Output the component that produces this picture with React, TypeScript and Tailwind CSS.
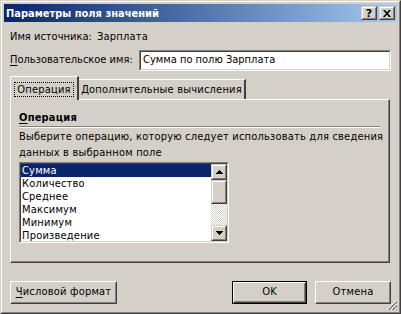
import React from 'react';

const raised =
  'border border-t-white border-l-white border-r-[#404040] border-b-[#404040]';
const raisedInner =
  'border border-t-[#d4d0c8] border-l-[#d4d0c8] border-r-[#808080] border-b-[#808080]';

function Btn({ children, w, isDefault }: { children: React.ReactNode; w: string; isDefault?: boolean }) {
  const inner = (
    <div className={`${raised} h-full w-full`}>
      <div className={`${raisedInner} h-full w-full flex items-center justify-center`}>{children}</div>
    </div>
  );
  if (isDefault) {
    return <div className={`${w} h-[23px] border border-black`}>{inner}</div>;
  }
  return <div className={`${w} h-[23px]`}>{inner}</div>;
}

function Arrow({ up }: { up?: boolean }) {
  return (
    <svg width="7" height="4" viewBox="0 0 7 4">
      <path d={up ? 'M3 0h1v1h1v1h1v1h1v1H0V3h1V2h1V1h1z' : 'M0 0h7v1H6v1H5v1H4v1H3V3H2V2H1V1H0z'} fill="#000" />
    </svg>
  );
}

function ScrollBtn({ children, h }: { children?: React.ReactNode; h: string }) {
  return (
    <div className={`w-[16px] ${h} border border-t-[#d4d0c8] border-l-[#d4d0c8] border-r-[#404040] border-b-[#404040]`}>
      <div className="h-full w-full border border-t-white border-l-white border-r-[#808080] border-b-[#808080] bg-[#d4d0c8] flex items-center justify-center">
        {children}
      </div>
    </div>
  );
}

const items = ['Сумма', 'Количество', 'Среднее', 'Максимум', 'Минимум', 'Произведение'];

export default function App() {
  return (
    <div className="w-[401px] h-[314px] bg-[#d4d0c8] text-[11px] tracking-[0.2px] whitespace-nowrap text-black font-['DejaVu_Sans_Condensed','DejaVu_Sans',sans-serif] select-none">
      <div className="relative h-full border border-t-[#d4d0c8] border-l-[#d4d0c8] border-r-[#404040] border-b-[#404040]">
        <div className="h-full border border-t-white border-l-white border-r-[#808080] border-b-[#808080] p-[2px] flex flex-col">
          {/* title bar */}
          <div className="h-[18px] bg-gradient-to-r from-[#0a246a] to-[#a6caf0] flex items-center pl-[2px] pr-[2px]">
            <span className="text-white font-bold text-[11px] tracking-normal leading-none">Параметры поля значений</span>
            <div className="ml-auto flex gap-[2px]">
              <ScrollBtn h="h-[14px]">
                <span className="font-bold text-[11px] leading-none font-['DejaVu_Sans',sans-serif]">?</span>
              </ScrollBtn>
              <ScrollBtn h="h-[14px]">
                <svg width="8" height="7" viewBox="0 0 8 7">
                  <path d="M0 0h2l2 2.3L6 0h2L5 3.5 8 7H6L4 4.7 2 7H0l3-3.5z" fill="#000" />
                </svg>
              </ScrollBtn>
            </div>
          </div>

          <div className="px-[6px] flex flex-col">
            <div className="mt-[8px] flex leading-[13px]">
              <span className="w-[87px] shrink-0 tracking-normal">Имя источника:</span>
              <span>Зарплата</span>
            </div>

            <div className="mt-[7px] flex items-center h-[21px]">
              <span className="w-[129px] shrink-0 tracking-normal">
                <span className="underline underline-offset-2">П</span>ользовательское имя:
              </span>
              <div className="flex-1 h-[21px] border border-t-[#808080] border-l-[#808080] border-r-white border-b-white">
                <div className="h-full border border-t-[#404040] border-l-[#404040] border-r-[#d4d0c8] border-b-[#d4d0c8] bg-white flex items-center pl-[2px] tracking-normal">
                  Сумма по полю Зарплата
                </div>
              </div>
            </div>

            {/* tabs */}
            <div className="mt-[5px] flex items-end">
              <div className="relative z-10 -mb-px h-[24px] w-[69px] bg-[#d4d0c8] border-t border-l border-t-white border-l-white border-r-2 border-r-[#404040] flex items-start justify-center pt-[5px]">
                <span className="border border-dotted border-black px-[2px] leading-[13px]">Операция</span>
              </div>
              <div className="h-[20px] w-[167px] border-t border-t-white border-r-2 border-r-[#404040] flex items-center justify-center pt-[1px]">
                Дополнительные вычисления
              </div>
            </div>

            {/* panel */}
            <div className="h-[164px] mr-px border-t border-l border-t-white border-l-white border-r border-b border-r-[#404040] border-b-[#404040]">
              <div className="h-full border-r border-b border-r-[#808080] border-b-[#808080] px-[8px] pt-[11px] flex flex-col">
                <div className="font-bold leading-[13px]">
                  <span className="underline underline-offset-2">О</span>перация
                </div>
                <div className="mt-[2px] h-[2px] border-t border-t-[#808080] border-b border-b-white" />
                <div className="mt-px leading-[16px]">
                  Выберите операцию, которую следует использовать для сведения
                  <br />
                  данных в выбранном поле
                </div>
                <div className="mt-px w-[210px] h-[81px] border border-t-[#808080] border-l-[#808080] border-r-white border-b-white">
                  <div className="h-full border border-t-[#404040] border-l-[#404040] border-r-[#d4d0c8] border-b-[#d4d0c8] bg-white flex">
                    <div className="flex-1 overflow-hidden">
                      {items.map((it, i) => (
                        <div
                          key={it}
                          className={`h-[13px] leading-[13px] pl-px ${i === 0 ? 'bg-[#0a246a] text-white' : ''}`}
                        >
                          {it}
                        </div>
                      ))}
                    </div>
                    <div className="w-[16px] flex flex-col">
                      <ScrollBtn h="h-[16px]">
                        <Arrow up />
                      </ScrollBtn>
                      <ScrollBtn h="h-[24px]" />
                      <div className="flex-1 bg-[repeating-conic-gradient(#d4d0c8_0%_25%,#ffffff_0%_50%)] bg-[length:2px_2px]" />
                      <ScrollBtn h="h-[16px]">
                        <Arrow />
                      </ScrollBtn>
                    </div>
                  </div>
                </div>
              </div>
            </div>

            {/* buttons */}
            <div className="mt-[18px] flex">
              <Btn w="w-[107px]">
                <span>
                  <span className="underline underline-offset-2">Ч</span>исловой формат
                </span>
              </Btn>
              <div className="ml-auto flex gap-[8px]">
                <Btn w="w-[75px]" isDefault>
                  OK
                </Btn>
                <Btn w="w-[76px]">Отмена</Btn>
              </div>
            </div>
          </div>
        </div>

        {/* size grip */}
        <svg className="absolute right-[2px] bottom-[2px]" width="12" height="12" viewBox="0 0 12 12">
          <path d="M11 1L1 11M11 5L5 11M11 9L9 11" stroke="#ffffff" strokeWidth="1" />
          <path d="M11 2L2 11M11 3L3 11M11 6L6 11M11 7L7 11M11 10L10 11" stroke="#808080" strokeWidth="1" />
        </svg>
      </div>
    </div>
  );
}
